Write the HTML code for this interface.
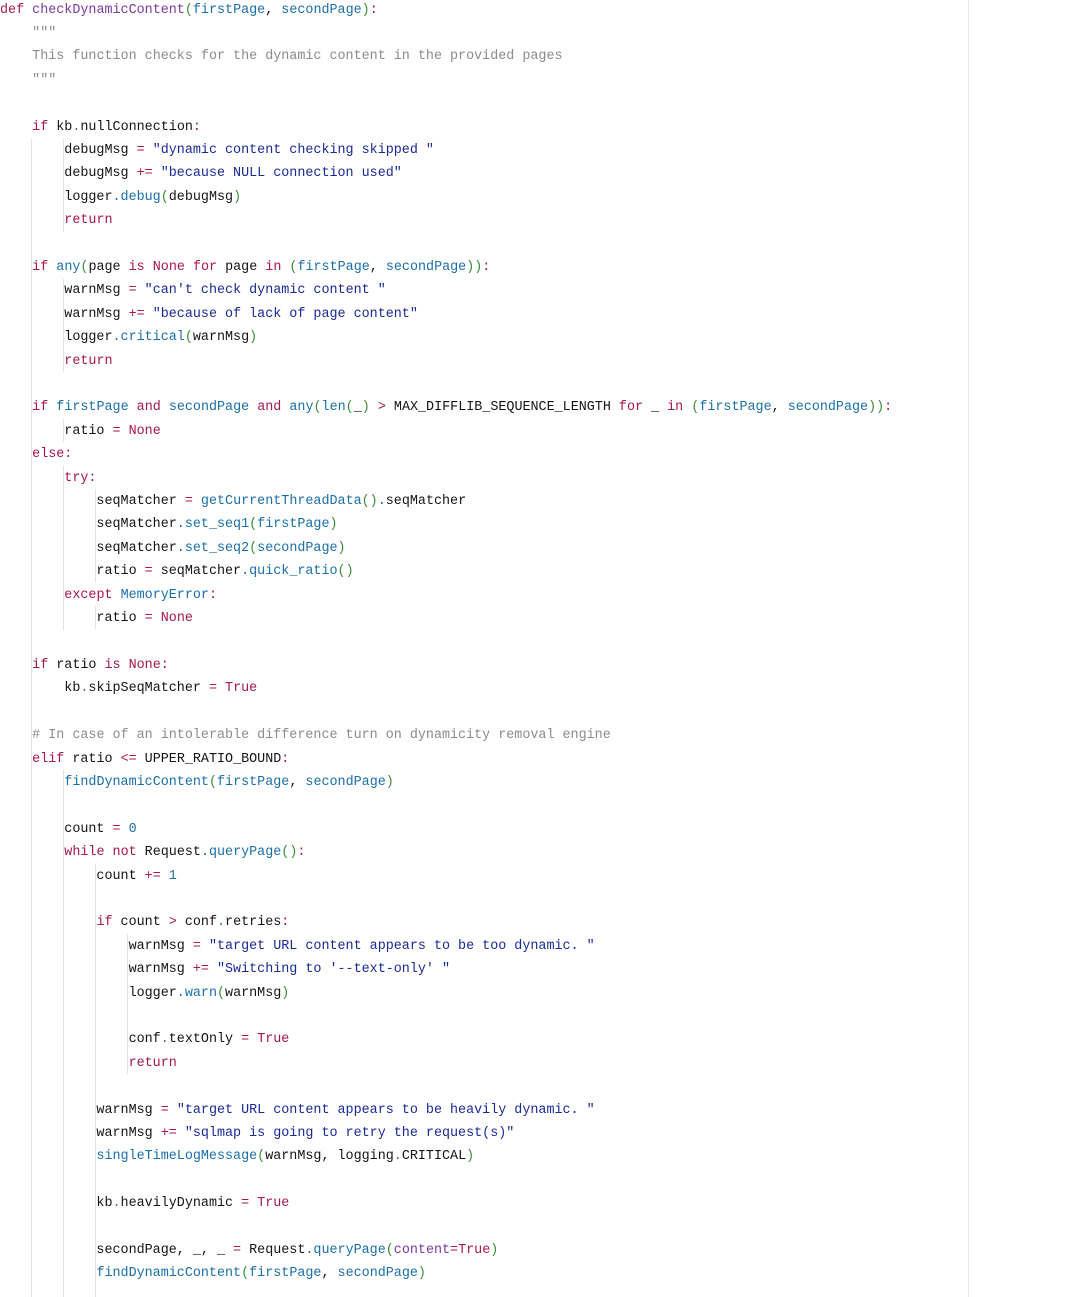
<!DOCTYPE html>
<html><head><meta charset="utf-8">
<style>
html,body{margin:0;padding:0;background:#fff;width:1080px;height:1297px;overflow:hidden;position:relative}
pre{position:absolute;left:0;top:-1.5px;margin:0;font-family:"Liberation Mono",monospace;font-size:13.4px;line-height:23.4px;color:#141414}
.k{color:#a8174f}.f{color:#7a3aa0}.p{color:#1b6fa8}.s{color:#1a2a96}.g{color:#3a8f3a}.c{color:#8c8c8c}.n{color:#1b6fa8}.o{color:#a8174f}
.gd{position:absolute;width:1px;background:#e2e2e2}
.rl{position:absolute;left:968px;top:0;width:1px;height:1297px;background:#e6e6e6}
</style></head><body>
<div class="rl"></div>
<div class="gd" style="left:31px;top:139px;height:1160px"></div>
<div class="gd" style="left:63px;top:139px;height:93px"></div>
<div class="gd" style="left:63px;top:279px;height:93px"></div>
<div class="gd" style="left:63px;top:419px;height:23px"></div>
<div class="gd" style="left:63px;top:466px;height:164px"></div>
<div class="gd" style="left:63px;top:770px;height:529px"></div>
<div class="gd" style="left:95px;top:489px;height:93px"></div>
<div class="gd" style="left:95px;top:606px;height:23px"></div>
<div class="gd" style="left:95px;top:864px;height:435px"></div>
<div class="gd" style="left:127px;top:934px;height:140px"></div>
<pre><span class="k">def</span> <span class="f">checkDynamicContent</span><span class="g">(</span><span class="p">firstPage</span>, <span class="p">secondPage</span><span class="g">)</span><span class="k">:</span>
    <span class="c">"""</span>
    <span class="c">This function checks for the dynamic content in the provided pages</span>
    <span class="c">"""</span>

    <span class="k">if</span> kb<span class="g">.</span>nullConnection<span class="k">:</span>
        debugMsg <span class="o">=</span> <span class="s">"dynamic content checking skipped "</span>
        debugMsg <span class="o">+=</span> <span class="s">"because NULL connection used"</span>
        logger<span class="p">.debug</span><span class="g">(</span>debugMsg<span class="g">)</span>
        <span class="k">return</span>

    <span class="k">if</span> <span class="p">any</span><span class="g">(</span>page <span class="k">is</span> <span class="k">None</span> <span class="k">for</span> page <span class="k">in</span> <span class="g">(</span><span class="p">firstPage</span>, <span class="p">secondPage</span><span class="g">))</span><span class="k">:</span>
        warnMsg <span class="o">=</span> <span class="s">"can't check dynamic content "</span>
        warnMsg <span class="o">+=</span> <span class="s">"because of lack of page content"</span>
        logger<span class="p">.critical</span><span class="g">(</span>warnMsg<span class="g">)</span>
        <span class="k">return</span>

    <span class="k">if</span> <span class="p">firstPage</span> <span class="k">and</span> <span class="p">secondPage</span> <span class="k">and</span> <span class="p">any</span><span class="g">(</span><span class="p">len</span><span class="g">(</span>_<span class="g">)</span> <span class="o">&gt;</span> MAX_DIFFLIB_SEQUENCE_LENGTH <span class="k">for</span> _ <span class="k">in</span> <span class="g">(</span><span class="p">firstPage</span>, <span class="p">secondPage</span><span class="g">))</span><span class="k">:</span>
        ratio <span class="o">=</span> <span class="k">None</span>
    <span class="k">else:</span>
        <span class="k">try:</span>
            seqMatcher <span class="o">=</span> <span class="p">getCurrentThreadData</span><span class="g">()</span><span class="p">.</span>seqMatcher
            seqMatcher<span class="p">.set_seq1</span><span class="g">(</span><span class="p">firstPage</span><span class="g">)</span>
            seqMatcher<span class="p">.set_seq2</span><span class="g">(</span><span class="p">secondPage</span><span class="g">)</span>
            ratio <span class="o">=</span> seqMatcher<span class="p">.quick_ratio</span><span class="g">()</span>
        <span class="k">except</span> <span class="p">MemoryError</span><span class="k">:</span>
            ratio <span class="o">=</span> <span class="k">None</span>

    <span class="k">if</span> ratio <span class="k">is</span> <span class="k">None:</span>
        kb<span class="g">.</span>skipSeqMatcher <span class="o">=</span> <span class="k">True</span>

    <span class="c"># In case of an intolerable difference turn on dynamicity removal engine</span>
    <span class="k">elif</span> ratio <span class="o">&lt;=</span> UPPER_RATIO_BOUND<span class="k">:</span>
        <span class="p">findDynamicContent</span><span class="g">(</span><span class="p">firstPage</span>, <span class="p">secondPage</span><span class="g">)</span>

        count <span class="o">=</span> <span class="n">0</span>
        <span class="k">while</span> <span class="k">not</span> Request<span class="p">.queryPage</span><span class="g">()</span><span class="k">:</span>
            count <span class="o">+=</span> <span class="n">1</span>

            <span class="k">if</span> count <span class="o">&gt;</span> conf<span class="g">.</span>retries<span class="k">:</span>
                warnMsg <span class="o">=</span> <span class="s">"target URL content appears to be too dynamic. "</span>
                warnMsg <span class="o">+=</span> <span class="s">"Switching to '--text-only' "</span>
                logger<span class="p">.warn</span><span class="g">(</span>warnMsg<span class="g">)</span>

                conf<span class="g">.</span>textOnly <span class="o">=</span> <span class="k">True</span>
                <span class="k">return</span>

            warnMsg <span class="o">=</span> <span class="s">"target URL content appears to be heavily dynamic. "</span>
            warnMsg <span class="o">+=</span> <span class="s">"sqlmap is going to retry the request(s)"</span>
            <span class="p">singleTimeLogMessage</span><span class="g">(</span>warnMsg, logging<span class="g">.</span>CRITICAL<span class="g">)</span>

            kb<span class="g">.</span>heavilyDynamic <span class="o">=</span> <span class="k">True</span>

            secondPage, _, _ <span class="o">=</span> Request<span class="p">.queryPage</span><span class="g">(</span><span class="f">content</span><span class="o">=</span><span class="k">True</span><span class="g">)</span>
            <span class="p">findDynamicContent</span><span class="g">(</span><span class="p">firstPage</span>, <span class="p">secondPage</span><span class="g">)</span>
</pre>
</body></html>
